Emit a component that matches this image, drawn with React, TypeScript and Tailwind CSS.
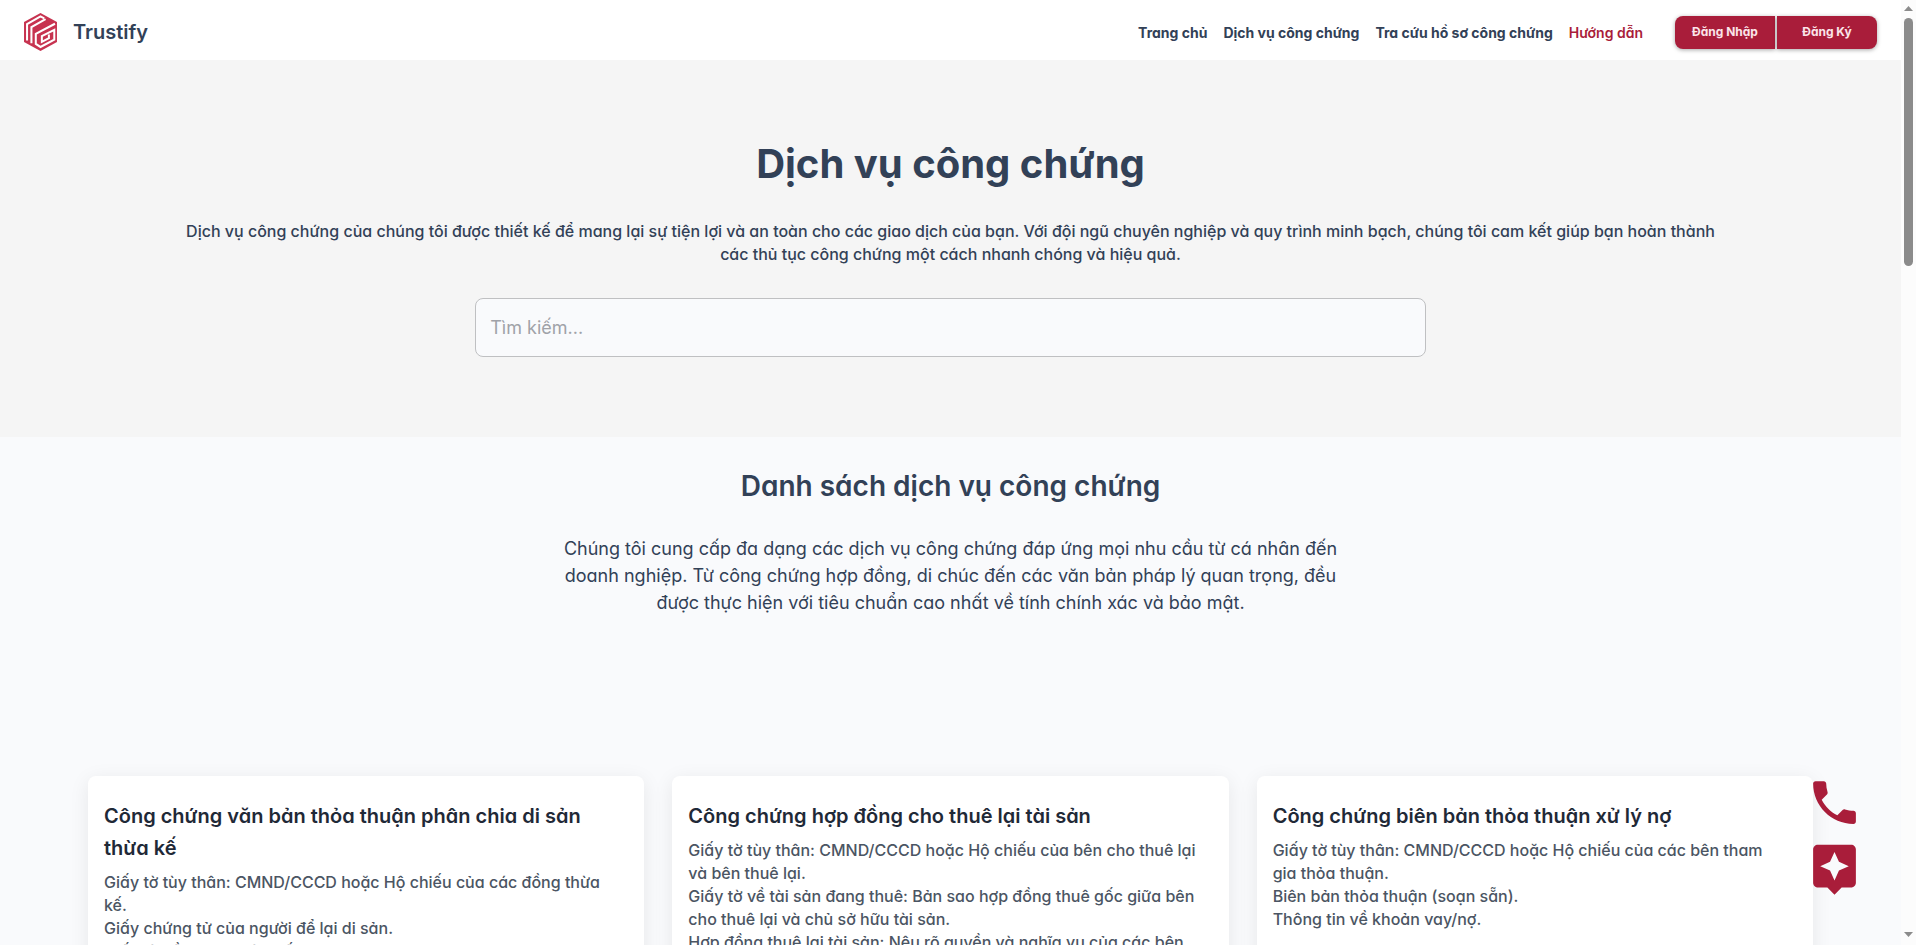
const navLinks = ["Trang chủ", "Dịch vụ công chứng", "Tra cứu hồ sơ công chứng"];

const services = [
  {
    title: "Công chứng văn bản thỏa thuận phân chia di sản thừa kế",
    items: [
      "Giấy tờ tùy thân: CMND/CCCD hoặc Hộ chiếu của các đồng thừa kế.",
      "Giấy chứng tử của người để lại di sản.",
      "Giấy tờ về di sản thừa kế.",
    ],
  },
  {
    title: "Công chứng hợp đồng cho thuê lại tài sản",
    items: [
      "Giấy tờ tùy thân: CMND/CCCD hoặc Hộ chiếu của bên cho thuê lại và bên thuê lại.",
      "Giấy tờ về tài sản đang thuê: Bản sao hợp đồng thuê gốc giữa bên cho thuê lại và chủ sở hữu tài sản.",
      "Hợp đồng thuê lại tài sản: Nêu rõ quyền và nghĩa vụ của các bên.",
    ],
  },
  {
    title: "Công chứng biên bản thỏa thuận xử lý nợ",
    items: [
      "Giấy tờ tùy thân: CMND/CCCD hoặc Hộ chiếu của các bên tham gia thỏa thuận.",
      "Biên bản thỏa thuận (soạn sẵn).",
      "Thông tin về khoản vay/nợ.",
    ],
  },
];

function Logo() {
  return (
    <svg viewBox="0 0 98 113" className="h-[38px] w-[33px]" aria-hidden="true">
      <path d="M49 0 98 27V86L49 113 0 86V27Z" fill="#c73350" />
      <g fill="none" stroke="#fff" strokeWidth="6">
        <path d="M9 82V33L49 10 60 16" />
        <path d="M22 90V42L64 18" />
        <path d="M92 32 35 62V92L49 101 90 79V50L53 69V86L74 75V64" />
      </g>
    </svg>
  );
}

function Header() {
  return (
    <header className="flex h-[60px] shrink-0 items-center justify-between bg-white px-6">
      <a href="#home" className="flex items-center gap-4 pt-1">
        <Logo />
        <span className="text-xl font-semibold">Trustify</span>
      </a>
      <div className="flex items-center gap-8 pt-1">
        <nav className="flex gap-4 pt-0.5 text-sm font-bold">
          {navLinks.map((label) => (
            <a key={label} href="#nav">{label}</a>
          ))}
          <a href="#guide" className="font-semibold text-[#a91d3a]">Hướng dẫn</a>
        </nav>
        <div className="flex gap-0.5 text-xs font-bold text-[#fbe4e9]">
          <button className="h-[33px] w-[100px] rounded-l-lg bg-[#a91d3a] shadow-[0_1px_4px_rgba(0,0,0,0.35)]">Đăng Nhập</button>
          <button className="h-[33px] w-[100px] rounded-r-lg bg-[#a91d3a] shadow-[0_1px_4px_rgba(0,0,0,0.35)]">Đăng Ký</button>
        </div>
      </div>
    </header>
  );
}

function ScrollBar() {
  return (
    <div className="flex w-[15px] shrink-0 flex-col items-center bg-[#fcfcfc] pt-1.5 pb-2" aria-hidden="true">
      <svg viewBox="0 0 9 5" className="h-[5px] w-[9px]"><path d="M0 5 4.5 0 9 5Z" fill="#8b8b8b" /></svg>
      <div className="mt-[7px] h-[248px] w-[9px] rounded-full bg-[#8b8b8b]" />
      <svg viewBox="0 0 9 5" className="mt-auto h-[5px] w-[9px]"><path d="M0 0 4.5 5 9 0Z" fill="#8b8b8b" /></svg>
    </div>
  );
}

export default function App() {
  return (
    <div className="flex h-screen overflow-hidden bg-[#f9fafc] font-['Inter',sans-serif] text-[#324157] [font-feature-settings:'cv11']">
      <div className="min-w-0 flex-1 overflow-hidden">
        <Header />
        <main>
          <section className="flex flex-col items-center bg-[#f5f5f5] py-20 text-center">
            <h1 className="text-[40px] leading-[48px] font-bold">Dịch vụ công chứng</h1>
            <p className="mt-8 max-w-[1550px] leading-[23px] font-medium">
              Dịch vụ công chứng của chúng tôi được thiết kế để mang lại sự tiện lợi và an toàn cho các giao dịch của bạn. Với đội ngũ chuyên nghiệp và quy trình minh bạch, chúng tôi cam kết giúp bạn hoàn thành các thủ tục công chứng một cách nhanh chóng và hiệu quả.
            </p>
            <input
              type="search"
              aria-label="Tìm kiếm"
              placeholder="Tìm kiếm..."
              className="mt-8 h-[59px] w-1/2 rounded-lg border border-[#bfc0c2] bg-[#f9fafc] px-3.5 text-lg placeholder:text-[#a0a2a8]"
            />
          </section>
          <section className="flex flex-col items-center px-[88px] pt-8">
            <h2 className="text-[28px] leading-[34px] font-semibold">Danh sách dịch vụ công chứng</h2>
            <p className="mt-8 max-w-[800px] text-center text-lg leading-[27px]">
              Chúng tôi cung cấp đa dạng các dịch vụ công chứng đáp ứng mọi nhu cầu từ cá nhân đến doanh nghiệp. Từ công chứng hợp đồng, di chúc đến các văn bản pháp lý quan trọng, đều được thực hiện với tiêu chuẩn cao nhất về tính chính xác và bảo mật.
            </p>
            <div className="mt-40 grid w-full grid-cols-3 gap-7">
              {services.map((service) => (
                <article key={service.title} className="min-h-80 rounded-lg bg-white px-4 py-6 shadow-[0_4px_20px_rgba(0,0,0,0.08)]">
                  <h3 className="text-xl leading-8 font-semibold text-[#1f2937]">{service.title}</h3>
                  <ul className="mt-[7px] pr-2 leading-[23px] font-medium text-[#4b5563]">
                    {service.items.map((item) => (
                      <li key={item}>{item}</li>
                    ))}
                  </ul>
                </article>
              ))}
            </div>
          </section>
        </main>
      </div>
      <ScrollBar />
      <div className="fixed right-[53px] bottom-12 flex flex-col gap-[9px] text-[#a91d3a]">
        <a href="tel:" aria-label="Gọi điện">
          <svg viewBox="0 0 24 24" fill="currentColor" className="size-[57px]">
            <path d="M6.62 10.79c1.44 2.83 3.76 5.14 6.59 6.59l2.2-2.2c.27-.27.67-.36 1.02-.24 1.12.37 2.33.57 3.57.57.55 0 1 .45 1 1V20c0 .55-.45 1-1 1-9.39 0-17-7.61-17-17 0-.55.45-1 1-1h3.5c.55 0 1 .45 1 1 0 1.25.2 2.45.57 3.57.11.35.03.74-.25 1.02l-2.2 2.2z" />
          </svg>
        </a>
        <button aria-label="Trợ lý">
          <svg viewBox="0 0 24 24" fill="currentColor" className="size-[57px]">
            <path d="M19 2H5c-1.11 0-2 .9-2 2v14c0 1.1.89 2 2 2h4l3 3 3-3h4c1.1 0 2-.9 2-2V4c0-1.1-.9-2-2-2zm-5.12 10.88L12 17l-1.88-4.12L6 11l4.12-1.88L12 5l1.88 4.12L18 11l-4.12 1.88z" />
          </svg>
        </button>
      </div>
    </div>
  );
}
